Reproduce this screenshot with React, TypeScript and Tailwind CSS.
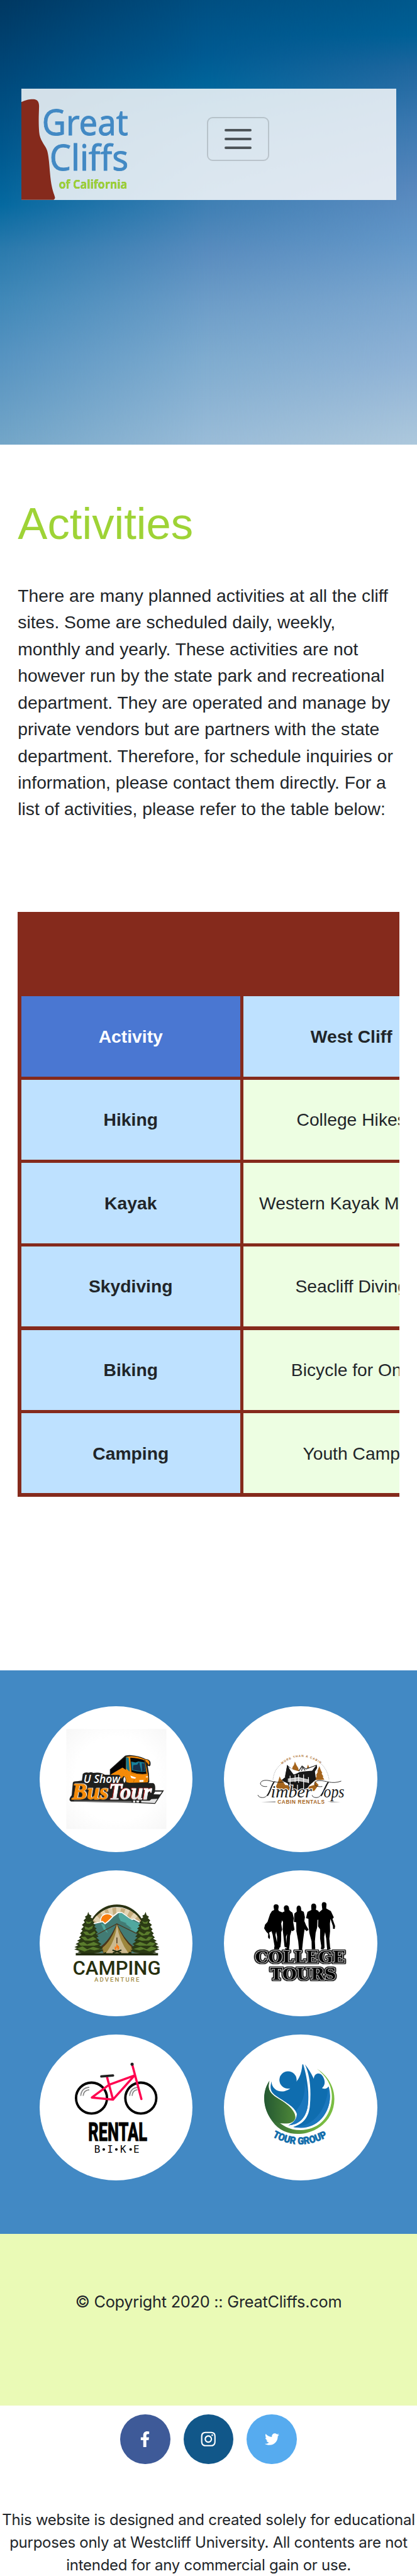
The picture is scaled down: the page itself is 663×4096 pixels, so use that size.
import React from "react";
import { FaFacebookF, FaInstagram, FaTwitter } from "react-icons/fa";

const rows = [
  ["Hiking", "College Hikes"],
  ["Kayak", "Western Kayak Meetup"],
  ["Skydiving", "Seacliff Diving"],
  ["Biking", "Bicycle for One"],
  ["Camping", "Youth Camp"],
];

function Sky() {
  return (
    <>
      <div className="absolute inset-0 bg-[linear-gradient(to_bottom,#003862_0%,#00497b_18%,#00598f_34%,#0569a0_46%,#2a7aad_56%,#3f88b8_67%,#5693c1_80%,#73a6c8_100%)]" />
      <div className="absolute inset-0 bg-[linear-gradient(to_bottom,#004f82_0%,#005a92_12%,#00659b_19%,#2a75aa_32%,#4482b6_48%,#5a8dbf_57%,#6d9dc8_68%,#7eabcf_80%,#9abcd8_100%)] [mask-image:linear-gradient(to_right,transparent,black_50%)]" />
      <div className="absolute inset-0 bg-[linear-gradient(to_bottom,#00588c_0%,#006096_8%,#1d669e_15%,#3b78b0_28%,#5787bd_42%,#6397c8_54%,#7ba6cf_67%,#90b3d6_82%,#adc8dc_100%)] [mask-image:linear-gradient(to_right,transparent_50%,black)]" />
    </>
  );
}

function CliffsLogo() {
  return (
    <svg viewBox="38 160 212 200" className="h-full w-[187.4px] shrink-0" role="img" aria-label="Great Cliffs of California">
      <path
        d="M38 184C46 180 55 178.500 60 179C67 179.500 70 184 69.800 192C69.500 205 68.500 220 70 238C71 252 80 261 83 268C89 280 88 315 93 337C95 347 98 352 98.500 356Q98.500 359 96 360H38Z"
        fill="#852a1c"
      />
      <g fontFamily="'Noto Sans', 'Open Sans', sans-serif">
        <g fill="#4289c4" stroke="#4289c4" strokeWidth="1" fontSize="63.500">
          <text x="75" y="244" textLength="155" lengthAdjust="spacingAndGlyphs">Great</text>
          <text x="88.500" y="307.500" textLength="142" lengthAdjust="spacingAndGlyphs">Cliffs</text>
        </g>
        <text x="105.300" y="339.800" fill="#9ed336" fontSize="21.500" fontWeight="700" textLength="123" lengthAdjust="spacingAndGlyphs" className="[filter:drop-shadow(0.8px_0.8px_0_#5f7d28)]">of California</text>
      </g>
    </svg>
  );
}

function BusTour() {
  return (
    <svg viewBox="63 87 827 789" className="size-full">
      <defs>
        <radialGradient id="paper" r="0.700">
          <stop offset="0.600" stopColor="#fff" />
          <stop offset="1" stopColor="#f7f7f7" />
        </radialGradient>
        <linearGradient id="steel" x1="0" x2="0" y1="0" y2="1">
          <stop offset="0.500" stopColor="#fff" />
          <stop offset="1" stopColor="#cfcfcf" />
        </linearGradient>
      </defs>
      <rect x="207" y="210" width="540" height="540" fill="url(#paper)" />
      <path d="M442 462V428L522 356Q530 350 552 351Q600 354 633 371Q655 372 661 388Q664 410 655 411L646 408Q655 450 655 495L648 505H500Z" fill="#20201e" />
      <path d="M446 430L510 373V420L446 455Z" fill="#050505" />
      <path d="M446 456L512 417L528 430L543 500L470 480Z" fill="#f68b08" />
      <path d="M510 372L528 362V430L510 418Z" fill="#050505" />
      <path d="M530 360Q580 350 630 374L648 460Q652 480 646 498L543 501L528 440Z" fill="#f68b08" />
      <path d="M529 362L543 365L549 440L530 424Z" fill="#16778e" />
      <path d="M552 364Q600 366 630 380L640 452Q600 458 558 442Z" fill="#080808" />
      <path d="M557 386L580 391L597 385L628 391L636 439Q600 444 561 432Z" fill="#18809a" />
      <path d="M568 405L590 402L600 387L612 438L566 431ZM614 394L626 396L633 436L616 439Z" fill="#17304b" />
      <path d="M552 461L584 472L578 478L558 475ZM634 470L646 463V472Z" fill="#fff" />
      <path d="M632 373Q653 375 656 394L653 405L644 392Q635 389 632 373Z" fill="#f68b08" />
      <path d="M601 486L624 485L623 495L602 496Z" fill="#fff" />
      <path d="M556 447Q605 457 642 452M574 482L570 497M640 477L634 495" stroke="#8d5209" strokeWidth="2" fill="none" />
      <path d="M226 596Q220 586 236 568L242 500Q246 491 265 492L291 488L296 452Q310 440 328 446Q342 441 352 447Q390 440 415 457L492 458Q505 468 503 479L516 464Q532 468 530 500L676 502Q690 508 686 541H734L686 614L560 608L232 601Z" fill="#20201e" />
      <path d="M686 548L724 548L713 563L678 562Z" fill="#fff" />
      <path d="M666 588L699 587L684 610L611 606L611 597L656 597Z" fill="#e3e3e3" />
      <path d="M567 596H579V607H567ZM584 596H601L599 607H586Z" fill="#e3e3e3" />
      <path d="M248 600L560 602" stroke="#777" strokeWidth="6" />
      <path d="M519 469Q526 468 527 484Q525 499 519 500Q511 485 519 469Z" fill="#eee" />
      <text x="300" y="502" fill="#fff" fontFamily="'Open Sans', sans-serif" fontSize="58" fontStyle="italic" fontWeight="600" textLength="198" lengthAdjust="spacingAndGlyphs">U Show</text>
      <g fontFamily="'Liberation Serif', serif" fontSize="122" fontStyle="italic" fontWeight="700">
        <text x="237" y="588" fill="#f68b08" stroke="#f68b08" strokeWidth="3" textLength="196" lengthAdjust="spacingAndGlyphs" className="[filter:drop-shadow(4px_-2px_0_#fff)]">Bus</text>
        <text x="436" y="588" fill="url(#steel)" stroke="url(#steel)" strokeWidth="3" textLength="232" lengthAdjust="spacingAndGlyphs" className="[filter:drop-shadow(-4px_-2px_0_#a31919)]">Tour</text>
      </g>
    </svg>
  );
}

function TimberTops() {
  return (
    <svg viewBox="69 87 827 789" className="size-full">
      <defs>
        <path id="cabinArc" d="M382 401Q485 320 596 401" />
      </defs>
      <path d="M334 482Q340 428 378 400M594 398Q628 430 636 482" fill="none" stroke="#777" strokeWidth="2" strokeDasharray="5 4" />
      <text fill="#a96a25" fontFamily="'Liberation Sans', sans-serif" fontSize="16" fontWeight="700">
        <textPath href="#cabinArc" textLength="226">MORE THAN A CABIN</textPath>
      </text>
      <g fill="#a5641c">
        <path d="M452 386L460 404L470 420L474 438H434L440 414L447 404Z" />
        <path d="M523 402L530 420H516Z" />
        <path d="M584 410L592 432L600 447L596 450L606 466L602 468L611 483L560 486L570 462L566 460L576 440L573 438Z" />
        <path d="M370 465L376 480L384 488L400 512L420 514L425 540H360L350 520L362 492Z" />
        <path d="M517 540L530 520L556 512L560 490L580 512L556 544Z" />
      </g>
      <path d="M410 405L440 428L470 438L490 407L512 424L570 403L572 420L560 440L566 482L530 514L512 540H425L415 505L380 486L400 470Z" fill="#171717" />
      <path d="M412 412L447 458L478 442L505 438L545 435L566 408L512 428L492 412L475 438L445 430Z" fill="#fff" />
      <path d="M400 468L412 408L437 460L465 452M488 436L494 414L507 434M410 470L430 448" fill="none" stroke="#171717" strokeWidth="4" />
      <path d="M414 477L472 470L528 484V499L472 490L414 496Z" fill="#bbb" />
      <path d="M426 462V540M453 458V497M472 454V500M499 455V537M525 470V502M466 510V540" stroke="#fff" strokeWidth="4" />
      <path d="M416 480L472 472L528 484M416 494L472 489L528 500" stroke="#fff" strokeWidth="2" fill="none" />
      <g fill="none" stroke="#1b1b1b">
        <path d="M302 520C262 525 252 492 290 487C320 483 350 510 411 490M345 491C318 520 314 580 278 580Q258 580 252 566" strokeWidth="3" />
        <path d="M600 520C548 528 548 488 585 488C620 488 650 510 702 491M635 494C608 522 602 580 568 580Q548 580 545 567" strokeWidth="3" />
        <path d="M340 495C322 520 318 555 302 570M632 497C615 520 607 556 592 571" strokeWidth="7" />
      </g>
      <g fill="#1b1b1b" stroke="#fff" strokeWidth="8" paintOrder="stroke" fontFamily="'Liberation Serif', serif" fontSize="92" fontStyle="italic">
        <text x="322" y="579" textLength="222" lengthAdjust="spacingAndGlyphs">imber</text>
        <text x="607" y="579" textLength="112" lengthAdjust="spacingAndGlyphs">ops</text>
      </g>
      <path d="M270 604L347 600V606ZM698 604L627 600L650 606Z" fill="#999" />
      <text x="358" y="613" fill="#a5641c" fontFamily="'Liberation Sans', sans-serif" fontSize="28" fontWeight="700" textLength="254">CABIN RENTALS</text>
    </svg>
  );
}

function Pine({ x }: { x: number }) {
  return (
    <g transform={`translate(${x} 0)`}>
      <path
        d="M0 296L6 310L18 316L13 326L28 335L20 342L34 352L28 360L40 368L33 376L46 386L38 392L52 408L42 414L56 430L44 434L62 450L52 456L72 470L60 476L80 492L64 498L84 502L60 515L30 520H-36L-58 513L-46 508L-75 498L-60 492L-74 486L-54 476L-68 470L-48 458L-60 452L-40 440L-50 434L-36 420L-44 412L-30 398L-38 390L-24 376L-34 366L-18 352L-25 342L-12 330L-18 322L-5 314Z"
        fill="#2b3a14"
      />
      <path
        d="M-14 345L2 352L20 346L10 360L-8 360ZM-20 374L2 382L26 370L22 386L4 394L-16 390ZM-28 404L-6 402L8 416L34 400L40 410L20 424L-14 420ZM-40 432L-16 430L-2 444L26 430L46 444L20 452L-18 450ZM-52 466L-24 458L-6 472L30 458L58 472L34 478L-10 478L-40 478ZM-62 494L-30 482L-6 498L26 484L66 496L34 504L10 498L-20 510Z"
        fill="#5a7c2c"
      />
    </g>
  );
}

function Camping() {
  return (
    <svg viewBox="63 72 827 789" className="size-full">
      <defs>
        <clipPath id="dome">
          <path d="M328 518V420A152 148 0 0 1 632 420V518Z" />
        </clipPath>
      </defs>
      <path d="M326 430A154 167 0 0 1 634 430" fill="none" stroke="#2b3312" strokeWidth="14" />
      <g clipPath="url(#dome)">
        <rect x="320" y="260" width="320" height="260" fill="#c6ad7e" />
        <path d="M478 430L340 330L362 306ZM478 430L385 290L408 280ZM478 430L428 272L453 265ZM478 430L476 262L504 264ZM478 430L530 268L554 280ZM478 430L580 290L600 312Z" fill="#e3d4b3" />
        <circle cx="428" cy="342" r="36" fill="#f97d0c" stroke="#fff" strokeWidth="5" />
        <path d="M325 372L345 361L388 352L402 348L416 360L434 346L462 318L486 300H506L536 322L556 338L572 335L600 350L640 376V520H325Z" fill="#427b74" stroke="#fff" strokeWidth="6" />
        <path d="M490 302H506L545 330L565 342L612 364L638 384V415L580 405L548 387L560 386L526 360L534 358L500 345L490 325Z" fill="#50a89f" />
        <path d="M394 359L412 365L421 390L432 411L408 390Z" fill="#50a89f" />
      </g>
      <path d="M370 420L480 360L600 420" fill="none" stroke="#4b351b" strokeWidth="4" />
      <path d="M480 358Q440 452 390 484L408 519H554L574 488Q516 443 480 358Z" fill="#4b351b" />
      <path d="M480 363Q452 450 399 492L410 519H552L565 492Q515 450 480 363Z" fill="#9d863c" />
      <path d="M480 363Q474 450 420 519H543Q493 455 480 363Z" fill="#cbb98f" />
      <path d="M480 434V466" stroke="#4b351b" strokeWidth="5" />
      <path d="M479 466Q483 479 490 480Q498 500 480 503Q462 502 470 481L475 488Z" fill="#fb7a16" />
      <path d="M480 488Q487 500 480 503Q472 501 480 488Z" fill="#cbb98f" />
      <path d="M456 502L503 518M504 502L458 518" stroke="#202b0e" strokeWidth="7" />
      <Pine x={325} />
      <g transform="translate(960 0) scale(-1 1)">
        <Pine x={325} />
      </g>
      <path d="M258 518H408L420 512L422 519H540L550 510L560 518H702V531H258Z" fill="#202b0e" />
      <g fontFamily="Roboto, sans-serif" fontWeight="500">
        <text x="241" y="636" fill="#28300f" fontSize="104" textLength="476" lengthAdjust="spacingAndGlyphs">CAMPING</text>
        <text x="358" y="674" fill="#a58f4c" fontSize="33" textLength="243">ADVENTURE</text>
      </g>
    </svg>
  );
}

function CollegeTours() {
  return (
    <svg viewBox="69 72 827 789" className="size-full">
      <g fill="#000">
        <path d="M337 268Q337 254 351 255Q367 256 364 272L362 284L366 292L382 298L386 330L378 360L383 392L378 405V450L374 485L362 496H340L342 480L332 420L326 400L313 408L318 432L315 444L307 434L308 414L298 404L286 385L291 365L304 350L318 308L328 292L340 286Z" />
        <path d="M392 275Q393 260 408 260Q422 263 421 285L430 294L439 300L446 330L443 352L450 392L440 400L434 396L426 425L424 470L420 500H408L407 488L396 484L390 425L386 390L388 350L378 335L380 300L396 293Z" />
        <path d="M461 276Q463 261 475 262Q487 265 486 288L500 296L506 325L503 345L513 370L526 392L516 400L504 390L496 450L491 500H474L470 455L460 400L459 352L447 350L449 305L462 294Z" />
        <path d="M540 265Q541 250 555 251Q569 254 567 272L565 284L578 290L583 300L580 332L574 340L572 380L564 410L560 455L562 498H543L542 455L530 410L526 370L525 333L512 330L520 296L541 286Z" />
        <path d="M597 258Q597 242 611 243Q625 245 622 262L621 277L646 292L662 326L655 334L669 372L667 388L658 388L657 372L644 334L641 360L642 400L638 440L642 487L645 497L626 500L621 440L615 405L610 430L612 490L605 498H592L594 480L588 440V390L577 374L578 340L571 332L580 300L600 283Z" />
        <path d="M345 478H366L368 498H339ZM398 490L420 498L404 506Z" />
      </g>
      <path d="M347 420L351 402L356 430L355 460ZM404 430L410 415L405 468Z" fill="#fff" />
      <g
        className="[filter:drop-shadow(4px_0_0_#111)_drop-shadow(-4px_0_0_#111)_drop-shadow(0_4px_0_#111)_drop-shadow(0_-4px_0_#111)]"
        fill="#000"
        stroke="#c4c4c4"
        strokeWidth="7"
        paintOrder="stroke"
        fontFamily="'DejaVu Serif', serif"
        fontSize="86"
        fontWeight="700"
      >
        <text x="237" y="570" textLength="486" lengthAdjust="spacingAndGlyphs">COLLEGE</text>
        <text x="319" y="661" textLength="356" lengthAdjust="spacingAndGlyphs">TOURS</text>
      </g>
    </svg>
  );
}

function RentalBike() {
  return (
    <svg viewBox="63 57 827 789" className="size-full">
      <g fill="none" strokeLinecap="round" strokeLinejoin="round">
        <g stroke="#000" strokeWidth="13">
          <circle cx="343" cy="400" r="83.500" />
          <circle cx="609" cy="400" r="83.500" />
        </g>
        <path d="M285 388Q288 346 331 342M298 388Q300 357 331 355M549 388Q552 346 595 342M562 388Q564 357 590 355" stroke="#888" strokeWidth="6" strokeLinecap="butt" />
        <path d="M427 288L459 408L345 397L438 328L575 278L459 408M564 224L612 405" stroke="#ff0550" strokeWidth="12" />
        <path d="M396 283L459 278" stroke="#222" strokeWidth="13" />
      </g>
      <circle cx="562" cy="217" r="8.500" fill="#222" />
      <text x="325" y="632" fill="#000" fontFamily="Roboto, sans-serif" fontSize="135" fontWeight="800" stroke="#000" strokeWidth="3" textLength="318" lengthAdjust="spacingAndGlyphs">RENTAL</text>
      <g fill="#000" fontFamily="'DejaVu Sans Mono', monospace" fontSize="54" textAnchor="middle">
        <text x="374" y="696">B</text>
        <text x="443" y="696">I</text>
        <text x="514" y="696">K</text>
        <text x="585" y="696">E</text>
      </g>
      <g fill="#000">
        <circle cx="409" cy="677" r="7" />
        <circle cx="477" cy="677" r="7" />
        <circle cx="554" cy="677" r="7" />
      </g>
    </svg>
  );
}

function TourGroup() {
  return (
    <svg viewBox="69 57 827 789" className="size-full">
      <defs>
        <path id="groupArc" d="M330 608Q480 692 634 606" />
        <linearGradient id="leaf">
          <stop stopColor="#245832" />
          <stop offset="1" stopColor="#4e8838" />
        </linearGradient>
        <linearGradient id="ring">
          <stop stopColor="#285e34" />
          <stop offset="0.850" stopColor="#7abd42" />
        </linearGradient>
      </defs>
      <path d="M315 306C270 370 280 460 330 525C375 590 450 602 515 588C610 565 665 490 665 405C665 335 625 275 571 242C632 290 655 345 651 405C645 500 585 570 482 573C420 572 380 545 355 519C395 545 450 540 455 505C455 465 405 425 355 400C310 370 304 345 315 306Z" fill="url(#ring)" />
      <path d="M315 306C283 355 280 415 300 470C318 520 350 540 408 537C440 535 455 520 453 497C450 465 400 425 350 395C310 365 305 345 315 306Z" fill="url(#leaf)" />
      <circle cx="415" cy="302" r="46.500" fill="#0f6daf" />
      <path d="M326 310C326 350 362 370 395 363Q415 358 428 348C400 350 400 330 420 328L461 310C482 285 490 250 492 218H497C525 310 530 400 520 450C510 505 475 545 417 547C450 540 468 515 464 490C455 450 405 425 360 395C320 370 315 350 326 310Z" fill="#0f6daf" />
      <path d="M505 315C510 380 490 430 461 465C467 495 460 525 417 547C475 545 510 505 520 450C528 400 520 355 505 315Z" fill="#1b77bd" />
      <path d="M506 218Q533 250 554 296C555 268 585 256 602 282C616 303 618 330 598 346Q621 356 634 337C648 385 643 430 620 475C590 535 530 570 443 556C500 540 528 500 533 440C540 360 535 280 506 218Z" fill="#0f6daf" />
      <path d="M631 340C628 440 570 545 462 555L443 556C525 575 585 535 615 485C642 440 648 390 631 340Z" fill="#1b77bd" />
      <text fill="#0f6cab" stroke="#0f6cab" strokeWidth="2" fontFamily="Roboto, sans-serif" fontSize="54" fontWeight="900">
        <textPath href="#groupArc" textLength="312" lengthAdjust="spacingAndGlyphs">TOUR GROUP</textPath>
      </text>
    </svg>
  );
}

const sponsors = [BusTour, TimberTops, Camping, CollegeTours, RentalBike, TourGroup];

export default function App() {
  return (
    <div className="h-[4096px] w-[663px] overflow-hidden bg-white font-['Liberation_Sans',Arial,sans-serif] text-[#212529]">
      <header className="relative h-[707.2px] px-[33.6px] pt-[141.4px]">
        <Sky />
        <nav className="relative flex h-[176.8px] w-[596.7px] bg-[#f8f9fa]/85">
          <CliffsLogo />
          <button aria-label="Menu" className="mt-[44.2px] ml-[108px] flex h-[70.7px] w-[99px] flex-col items-center justify-center gap-[10.6px] rounded-[9px] border-2 border-black/15">
            <span className="h-[3.5px] w-[42.4px] rounded-full bg-[#4e555a]" />
            <span className="h-[3.5px] w-[42.4px] rounded-full bg-[#4e555a]" />
            <span className="h-[3.5px] w-[42.4px] rounded-full bg-[#4e555a]" />
          </button>
        </nav>
      </header>

      <main className="h-[1949.2px] pt-[84px] pl-[28.3px]">
        <h1 className="text-[70.7px] leading-[84.9px] text-[#9ed336]">Activities</h1>
        <p className="mt-[49.8px] w-[612px] text-[28.28px] leading-[42.43px]">
          There are many planned activities at all the cliff
          <br />
          sites. Some are scheduled daily, weekly,
          <br />
          monthly and yearly. These activities are not
          <br />
          however run by the state park and recreational
          <br />
          department. They are operated and manage by
          <br />
          private vendors but are partners with the state
          <br />
          department. Therefore, for schedule inquiries or
          <br />
          information, please contact them directly. For a
          <br />
          list of activities, please refer to the table below:
        </p>
        <div className="mt-[142px] w-[606.4px] overflow-hidden">
          <div className="w-[702px] bg-[#852a1c] pt-[134.4px] pb-[5.3px] pl-[5.3px] text-[28.28px]">
            <div className="grid grid-cols-[348.3px_343px] gap-[5.3px] text-center">
              <div className="flex h-[127.3px] items-center justify-center bg-[#4a77d2] font-bold text-white">Activity</div>
              <div className="flex h-[127.3px] items-center justify-center bg-[#bee1ff] font-bold">West Cliff</div>
              {rows.map(([name, host]) => (
                <React.Fragment key={name}>
                  <div className="flex h-[127.3px] items-center justify-center bg-[#bee1ff] font-bold">{name}</div>
                  <div className="flex h-[127.3px] items-center justify-center bg-[#edfee2] whitespace-nowrap">{host}</div>
                </React.Fragment>
              ))}
            </div>
          </div>
        </div>
      </main>

      <section className="h-[895.5px] bg-[#4289c4] pt-[56.6px] pl-[62.8px]">
        <div className="grid grid-cols-[243.7px_243.7px] gap-x-[49.8px] gap-y-[28.3px]">
          {sponsors.map((Logo, i) => (
            <div key={i} className="h-[232.5px] overflow-hidden rounded-[50%] bg-white">
              <Logo />
            </div>
          ))}
        </div>
      </section>

      <footer className="font-[Inter,sans-serif]">
        <div className="h-[273.6px] bg-[#eafab6] pt-[87.5px] text-center text-[25.3px] leading-[42px] tracking-[-0.25px] whitespace-nowrap">
          © Copyright 2020 :: GreatCliffs.com
        </div>
        <div className="flex justify-center gap-[21.2px] pt-[13.4px] text-white">
          <a className="flex size-[79.5px] items-center justify-center rounded-full bg-[#3e5a98]"><FaFacebookF size={25} /></a>
          <a className="flex size-[79.5px] items-center justify-center rounded-full bg-[#115789]"><FaInstagram size={26.5} /></a>
          <a className="flex size-[79.5px] items-center justify-center rounded-full bg-[#56abef]"><FaTwitter size={23} /></a>
        </div>
        <p className="mt-[70.5px] text-center text-[24px] leading-[36.1px] tracking-[-0.26px] whitespace-nowrap">
          This website is designed and created solely for educational
          <br />
          purposes only at Westcliff University. All contents are not
          <br />
          intended for any commercial gain or use.
        </p>
      </footer>
    </div>
  );
}
